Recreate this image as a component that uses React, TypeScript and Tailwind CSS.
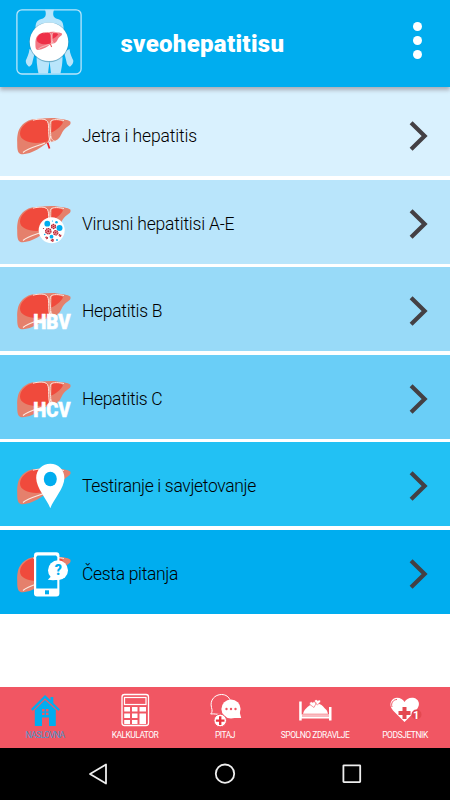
import type { ReactNode } from 'react';

type Extra = 'none' | 'virus' | 'HBV' | 'HCV' | 'pin' | 'phone';

const ROWS: { label: string; extra: Extra; row: string; text: string }[] = [
  { label: 'Jetra i hepatitis', extra: 'none', row: 'h-[89px] pt-[9px] bg-[#d9f1fe]', text: 'tracking-[-0.15px]' },
  { label: 'Virusni hepatitisi A-E', extra: 'virus', row: 'h-[84px] pt-[4px] bg-[#b9e5fb]', text: 'tracking-[-0.2px]' },
  { label: 'Hepatitis B', extra: 'HBV', row: 'h-[84px] pt-[4px] bg-[#98daf8]', text: 'tracking-[-0.3px]' },
  { label: 'Hepatitis C', extra: 'HCV', row: 'h-[84px] pt-[4px] bg-[#6acef7]', text: 'tracking-[-0.35px]' },
  { label: 'Testiranje i savjetovanje', extra: 'pin', row: 'h-[84px] pt-[4px] bg-[#22c1f4]', text: 'tracking-[-0.33px]' },
  { label: 'Česta pitanja', extra: 'phone', row: 'h-[84px] pt-[4px] bg-[#00adef]', text: 'tracking-[-0.32px]' },
];

function Liver({ pink = '#e5806c', red = '#f04a3c' }: { pink?: string; red?: string }) {
  return (
    <g>
      <path d="M1.2 30C1 24 2 18 5 14.5C9 9 15 7 23 6.8C29 6.5 35 5.7 41 6.4C46 7 52 7.5 54.3 9.5C55.3 12 53.5 13.5 51 15C46.5 18 46 22 43.5 25.5C41 29 37 30 33 29.8C28 33 23 37.5 16 40C11 42 5 43.5 3 41C1 38.5 1.3 34 1.2 30Z" fill={pink} />
      <path d="M4 21.5C4.5 15 10 9.5 18 8C23 7 29 6.5 31.5 10C33.5 15 33.5 25 31.5 29.5C24 31.5 14 31.5 9 28.5C5.5 26.5 4 24.5 4 21.5Z" fill={red} />
      <path d="M36 8.5C39 7 45.5 8 47 10.5C45 14.5 40 18.5 35.3 20.5Z" fill={red} />
      <path d="M17 8.2C22 7 29 6 31.5 9.5C34 14 31 24 35 30.5M48 8.5C43 7.5 37 7 35 9C32.5 13 35.5 21 34.5 25C34 28 33 29 31 31M34.8 24C35.5 28 38 29.5 39 29" fill="none" stroke="#fde4dc" strokeWidth="1" />
      <path d="M7 40.5C12 36 20 34.5 29 31" fill="none" stroke="#fbe9e2" strokeWidth="1.1" />
      <path d="M31.5 30.5L33.5 36.5" stroke="#ee1c25" strokeWidth="1.7" />
    </g>
  );
}

function Virus() {
  return (
    <g>
      <circle cx="35.7" cy="30.3" r="13" fill="#fff" />
      <g fill="#00adef">
        <circle cx="31.3" cy="23.7" r="2.9" />
        <circle cx="43.5" cy="28" r="3" />
        <circle cx="35.5" cy="36.7" r="1.9" />
        <circle cx="40.5" cy="22.3" r="1.3" />
        <circle cx="28.7" cy="34.5" r=".8" />
        <circle cx="41" cy="40" r=".9" />
        <circle cx="36.5" cy="21" r=".6" />
      </g>
      <g fill="#e9959b" stroke="#b8202f" strokeWidth="1.2" strokeDasharray="1.5 .5">
        <circle cx="37.5" cy="26.5" r="2.1" />
        <circle cx="32.3" cy="31.2" r="2.7" />
        <circle cx="39.7" cy="32.8" r="2.2" />
        <circle cx="30.7" cy="37.8" r=".8" />
        <circle cx="36.3" cy="40.3" r="1" />
        <circle cx="44" cy="35.5" r=".8" />
      </g>
      <g fill="#b8202f">
        <circle cx="37.5" cy="26.5" r=".8" />
        <circle cx="32.3" cy="31.2" r="1" />
        <circle cx="39.7" cy="32.8" r=".8" />
        <circle cx="27.5" cy="28.5" r=".6" />
      </g>
    </g>
  );
}

function RowIcon({ extra }: { extra: Extra }) {
  return (
    <svg width="56" height="48" viewBox="0 0 56 48" className="ml-4 shrink-0">
      <Liver />
      {extra === 'virus' && <Virus />}
      {(extra === 'HBV' || extra === 'HCV') && (
        <text x="17.2" y="42" textLength="37.3" lengthAdjust="spacingAndGlyphs" fill="#fff" stroke="#fff" strokeWidth=".5" className="font-['Roboto',sans-serif] text-[19.5px] font-black">
          {extra}
        </text>
      )}
      {extra === 'pin' && (
        <g>
          <path d="M34.3 46.2C31 37.5 20.2 26 20.2 16C20.2 7.5 26.5 1.8 34.3 1.8S48.4 7.5 48.4 16C48.4 26 37.6 37.5 34.3 46.2Z" fill="#fff" />
          <ellipse cx="34.3" cy="17" rx="6.5" ry="7.3" fill="#00adef" />
        </g>
      )}
      {extra === 'phone' && (
        <g>
          <rect x="18" y="2.2" width="25.4" height="44.2" rx="3" fill="#fff" />
          <path d="M21.5 5.5H40L41.3 7V38.5H20.2V7Z" fill="#00adef" />
          <rect x="29" y="40.3" width="4" height="4" fill="#00adef" />
          <circle cx="42" cy="20.3" r="10" fill="#fff" />
          <path d="M33 23L35 26.5L31.8 29.8C36 30.3 39 30.2 42 29.8Z" fill="#fff" />
          <text x="42.2" y="25" textAnchor="middle" fill="#00adef" className="font-['Roboto',sans-serif] text-[14px] font-black">?</text>
        </g>
      )}
    </svg>
  );
}

function Logo() {
  return (
    <svg width="66" height="66" viewBox="0 0 66 66" className="ml-4 mt-[9px] shrink-0">
      <g fill="#b9e5fb">
        <path d="M29 .8H38C36.5 5 37 8 40 9.5C45 11 47 12 47.5 18V30H19.5V18C20 12 22 11 27 9.5C30 8 30.5 5 29 .8Z" />
        <path d="M21 42H46C47.3 50 46 58 44.5 64.5H35L33.5 52L32 64.5H22.5C21 58 20 50 21 42Z" />
        <path d="M13.5 40C13 45 11 48.5 9.8 51.5C9.7 54 10.5 55 11.3 56L13 57.8L14.3 57L16 55L17.2 50L19 43ZM53.5 40C54 45 56 48.5 57.3 51.5C57.5 54 56.5 55 55.7 56L54 57.8L52.7 57L51 55L49.8 50L48 43Z" />
      </g>
      <rect x=".9" y=".8" width="64.2" height="64.2" rx="5" fill="none" stroke="#b9e5fb" strokeWidth="1.3" />
      <circle cx="33" cy="33.2" r="20" fill="#3a86a6" opacity=".55" />
      <circle cx="33" cy="32.8" r="19.3" fill="#fff" />
      <g transform="translate(18.8 19.8) scale(.5)">
        <Liver pink="#f27783" red="#ee3048" />
      </g>
    </svg>
  );
}

function HomeIcon() {
  return (
    <g>
      <path d="M16 20L30 6L35.5 11.2V8H38.3V14L45 20.5L43.3 21.8L30 9.2L17.6 21.8Z" fill="#00adef" />
      <path d="M19.8 21L30 11L40.8 21V37H34V28.5H27V37H19.8Z" fill="#00adef" />
      <path d="M27 20H29.5V22.4H27ZM31 20H33.5V22.4H31ZM27 23.7H29.5V26H27ZM31 23.7H33.5V26H31Z" fill="#f15663" />
    </g>
  );
}

function CalcIcon() {
  return (
    <g>
      <rect x="17" y="5.5" width="26.5" height="31" rx="2.5" fill="none" stroke="#fff" strokeWidth="1.3" />
      <rect x="19.5" y="8.5" width="21.5" height="7" fill="none" stroke="#fff" strokeWidth="1.2" />
      <path d="M19.2 18H25V22.5H19.2ZM27 18H32.5V22.5H27ZM34.5 18H41V22.5H34.5ZM19.2 24.5H25V29H19.2ZM27 24.5H32.5V29H27ZM19.2 31H25V35H19.2ZM27 31H32.5V35H27ZM34.5 24.5H41V35H34.5Z" fill="#fff" />
    </g>
  );
}

function AskIcon() {
  return (
    <g>
      <path d="M26 25.5C22.5 25.5 19 24.5 15.7 25C17.5 23 17.3 21.5 16.5 18.5C14.5 11 20 5.5 26.5 5.5C31 5.5 34 8 35.3 11.5" fill="none" stroke="#fff" strokeWidth="1" />
      <circle cx="36" cy="20" r="9.6" fill="#fff" />
      <path d="M44 21L46.2 29H34Z" fill="#fff" />
      <g fill="#f15663">
        <circle cx="31.5" cy="20" r="1.2" />
        <circle cx="36" cy="20" r="1.2" />
        <circle cx="40.5" cy="20" r="1.2" />
      </g>
      <circle cx="25.2" cy="31.5" r="6.3" fill="#fff" stroke="#f15663" strokeWidth="1" />
      <path d="M24 27.3H26.4V30.4H29.5V32.8H26.4V35.9H24V32.8H20.9V30.4H24Z" fill="#e8343f" />
    </g>
  );
}

function BedIcon() {
  return (
    <g fill="#fff">
      <path d="M14.2 12.5H16.7V25.5H44V18H46.5V31.5H44V29.5H16.7V31.5H14.2Z" />
      <path d="M18 24.8C19 21 21 19.5 22.5 18C25.5 15 29 14.8 33 14.8C37 15 38 18 41 20.5C42 21.5 42.5 23 43 24.8Z" />
      <path d="M17 27H44" stroke="#f15663" strokeWidth=".8" />
      <path d="M29 18.5L24.8 15.5C24 13 26.5 12 28 13.5C29 11.5 31.8 13 30.7 15.2ZM32.3 16L29.5 12.8C29.3 10.3 31.8 10 32.8 11.7C34.5 9.8 36.5 11.7 35 13.6Z" stroke="#f15663" strokeWidth=".6" />
    </g>
  );
}

function ReminderIcon() {
  return (
    <g>
      <path d="M29.5 33L18 21.5C12.5 15 17 8.8 22 8.8C25.5 8.8 28 10.5 29.5 13C31 10.5 33.5 8.8 37 8.8C43 8.8 47 15 41 21.5Z" fill="#fff" />
      <path d="M17 18C15.5 14 18.5 10.5 22 10.5" fill="none" stroke="#f15663" strokeWidth="1" />
      <path d="M27.5 18H31.5V22H35.5V26H31.5V30H27.5V26H23.5V22H27.5Z" fill="#e34850" />
      <circle cx="41.5" cy="25.5" r="5" fill="#e34850" />
      <text x="38" y="30" fill="#fff" className="font-['Roboto',sans-serif] text-[11px] font-bold">1</text>
    </g>
  );
}

const TABS: { label: string; icon: ReactNode; text: string }[] = [
  { label: 'NASLOVNA', icon: <HomeIcon />, text: 'text-[#4a97cc] tracking-[-0.6px]' },
  { label: 'KALKULATOR', icon: <CalcIcon />, text: 'text-white tracking-[-0.55px]' },
  { label: 'PITAJ', icon: <AskIcon />, text: 'text-white tracking-[-0.5px]' },
  { label: 'SPOLNO ZDRAVLJE', icon: <BedIcon />, text: 'text-white tracking-[-0.45px]' },
  { label: 'PODSJETNIK', icon: <ReminderIcon />, text: 'text-white tracking-[-0.45px]' },
];

export default function App() {
  return (
    <div className="flex h-[800px] w-[450px] flex-col overflow-hidden bg-white font-['Roboto',sans-serif]">
      <header className="relative z-10 flex h-[87px] shrink-0 bg-[#00adef] shadow-[0_3px_4px_rgba(60,20,20,0.3)]">
        <Logo />
        <h1 className="ml-[38.5px] mt-[28px] text-[24px] leading-8 font-black tracking-[0.3px] text-white">sveohepatitisu</h1>
        <div className="mt-[22px] mr-7 ml-auto flex flex-col gap-[4.5px]">
          <span className="size-[9.4px] rounded-full bg-white" />
          <span className="size-[9.4px] rounded-full bg-white" />
          <span className="size-[9.4px] rounded-full bg-white" />
        </div>
      </header>

      <main className="flex flex-col gap-[3.5px]">
        {ROWS.map(r => (
          <div key={r.label} className={`flex shrink-0 items-center ${r.row}`}>
            <RowIcon extra={r.extra} />
            <span className={`ml-[10px] text-[17.5px] leading-6 font-light text-black ${r.text}`}>{r.label}</span>
            <svg width="20" height="32" viewBox="0 0 20 32" className="mr-[22px] ml-auto">
              <path d="M3.1 2.8L16.6 16L3.1 29.2" fill="none" stroke="#444044" strokeWidth="4.2" />
            </svg>
          </div>
        ))}
      </main>

      <nav className="mt-auto flex h-[61px] shrink-0 bg-[#f15663]">
        {TABS.map(t => (
          <div key={t.label} className="flex w-[90px] flex-col items-center pt-[2px]">
            <svg width="60" height="40" viewBox="0 0 60 40">{t.icon}</svg>
            <span className={`text-[8.5px] leading-3 whitespace-nowrap ${t.text}`}>{t.label}</span>
          </div>
        ))}
      </nav>

      <div className="flex h-[52px] shrink-0 items-center bg-black pl-[88px] text-[#eee]">
        <svg width="22" height="22" viewBox="0 0 22 22">
          <path d="M2 11L18 1.5V20.5Z" fill="none" stroke="currentColor" strokeWidth="1.8" strokeLinejoin="round" />
        </svg>
        <svg width="22" height="22" viewBox="0 0 22 22" className="ml-[104px]">
          <circle cx="11" cy="10.7" r="9.2" fill="none" stroke="currentColor" strokeWidth="1.8" />
        </svg>
        <svg width="22" height="22" viewBox="0 0 22 22" className="ml-[105px]">
          <rect x="2.4" y="2.3" width="16.8" height="16.8" rx=".5" fill="none" stroke="currentColor" strokeWidth="1.8" />
        </svg>
      </div>
    </div>
  );
}
